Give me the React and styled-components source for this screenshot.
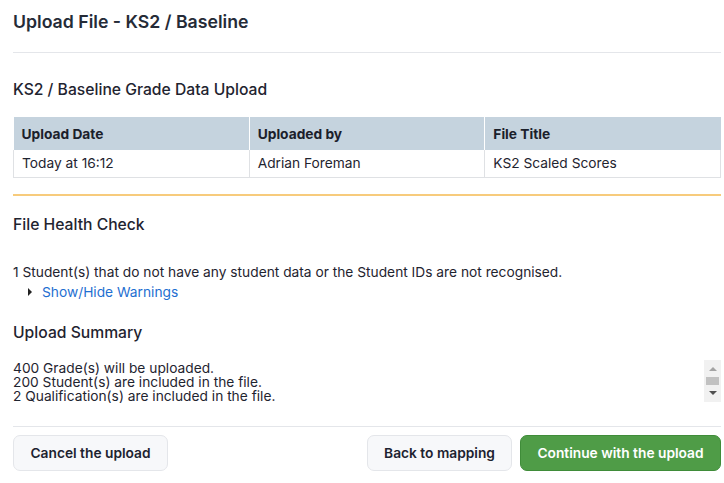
import React from "react";
import styled, { createGlobalStyle } from "styled-components";

const Global = createGlobalStyle`
  html, body { margin: 0; padding: 0; background: #fff; }
  body { font-family: Inter, "Noto Sans", sans-serif; color: #1f2430; }
  * { box-sizing: border-box; }
`;

const Page = styled.div`
  width: 724px;
  padding: 0 3px 0 13px;
`;

const Header = styled.header`
  height: 53px;
  padding-top: 10px;
  border-bottom: 1px solid #e4e6ea;
`;

const Title = styled.h1`
  margin: 0;
  font-size: 17.7px;
  line-height: 24px;
  font-weight: 600;
  color: #252b37;
`;

const SectionTitle = styled.h2`
  margin: ${(p) => p.$top}px 0 0;
  font-size: 15.7px;
  line-height: 24px;
  font-weight: 500;
  color: #1f2430;
`;

const Table = styled.table`
  width: 100%;
  margin-top: 15px;
  border-collapse: collapse;
  table-layout: fixed;
  font-size: 13.75px;
`;

const Th = styled.th`
  height: 33px;
  padding: 0 8px;
  text-align: left;
  font-weight: 700;
  color: #1b202b;
  background: #c5d3de;
  border-left: 1px solid #ffffff;
  &:first-child { border-left: none; }
`;

const Td = styled.td`
  height: 27px;
  padding: 0 8px;
  color: #1f2430;
  border: 1px solid #dfe1e4;
  border-top: none;
`;

const Accent = styled.hr`
  margin: 16px 0 0;
  border: none;
  height: 2px;
  background: #f7cb7c;
`;

const Text = styled.p`
  margin: ${(p) => p.$top}px 0 0;
  font-size: 13.75px;
  line-height: 20px;
  color: #1f2430;
`;

const Toggle = styled.a`
  display: flex;
  align-items: center;
  gap: 10px;
  padding-left: 15px;
  font-size: 13.75px;
  line-height: 20px;
  color: #1f6fd1;
  text-decoration: none;
  cursor: pointer;
`;

const Caret = styled.span`
  width: 0;
  height: 0;
  border-top: 4px solid transparent;
  border-bottom: 4px solid transparent;
  border-left: 4px solid #222;
`;

const ScrollBox = styled.div`
  margin-top: 15px;
  height: 42px;
  display: flex;
`;

const ScrollContent = styled.div`
  flex: 1;
  padding-top: 1px;
  font-size: 13.75px;
  line-height: 14px;
  color: #1f2430;
`;

const Line = styled.div``;

const Scrollbar = styled.div`
  width: 17px;
  background: #f1f1f1;
  display: flex;
  flex-direction: column;
  align-items: center;
  padding-top: 7px;
`;

const Arrow = styled.span`
  width: 0;
  height: 0;
  border-left: 4px solid transparent;
  border-right: 4px solid transparent;
  ${(p) =>
    p.$up
      ? `border-bottom: 4px solid #a3a3a3;`
      : `border-top: 4px solid #505050;`}
`;

const Thumb = styled.span`
  width: 13px;
  height: 8px;
  margin: 6px 0 6px;
  background: #c1c1c1;
`;

const Footer = styled.footer`
  margin-top: 24px;
  border-top: 1px solid #e4e6ea;
  padding-top: 8px;
  display: flex;
  align-items: center;
  gap: 8px;
`;

const Button = styled.button`
  height: 36px;
  padding: 0;
  white-space: nowrap;
  border-radius: 7px;
  font-family: Inter, "Noto Sans", sans-serif;
  font-size: 13.75px;
  font-weight: 600;
  cursor: pointer;
  border: 1px solid ${(p) => (p.$primary ? "#3f8c39" : "#e4e6ea")};
  background: ${(p) => (p.$primary ? "#4f9c47" : "#f7f8fa")};
  color: ${(p) => (p.$primary ? "#ffffff" : "#1d2330")};
  width: ${(p) => p.$w}px;
  ${(p) => (p.$push ? "margin-left: auto;" : "")}
`;

export default function App() {
  return (
    <Page>
      <Global />
      <Header>
        <Title>Upload File - KS2 / Baseline</Title>
      </Header>
      <SectionTitle $top={25}>KS2 / Baseline Grade Data Upload</SectionTitle>
      <Table>
        <thead>
          <tr>
            <Th>Upload Date</Th>
            <Th>Uploaded by</Th>
            <Th>File Title</Th>
          </tr>
        </thead>
        <tbody>
          <tr>
            <Td>Today at 16:12</Td>
            <Td>Adrian Foreman</Td>
            <Td>KS2 Scaled Scores</Td>
          </tr>
        </tbody>
      </Table>
      <Accent />
      <SectionTitle $top={17}>File Health Check</SectionTitle>
      <Text $top={25}>
        1 Student(s) that do not have any student data or the Student IDs are not recognised.
      </Text>
      <Toggle>
        <Caret />
        Show/Hide Warnings
      </Toggle>
      <SectionTitle $top={19}>Upload Summary</SectionTitle>
      <ScrollBox>
        <ScrollContent>
          <Line>400 Grade(s) will be uploaded.</Line>
          <Line>200 Student(s) are included in the file.</Line>
          <Line>2 Qualification(s) are included in the file.</Line>
        </ScrollContent>
        <Scrollbar>
          <Arrow $up />
          <Thumb />
          <Arrow />
        </Scrollbar>
      </ScrollBox>
      <Footer>
        <Button $w={155}>Cancel the upload</Button>
        <Button $w={145} $push>Back to mapping</Button>
        <Button $w={201} $primary>Continue with the upload</Button>
      </Footer>
    </Page>
  );
}
